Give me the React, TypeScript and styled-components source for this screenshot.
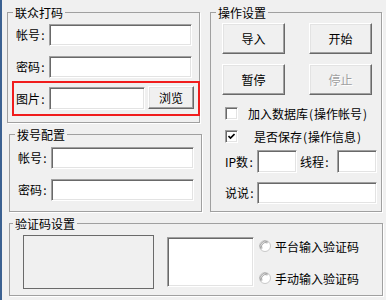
import React from "react";
import styled, { createGlobalStyle } from "styled-components";

const Global = createGlobalStyle`
  html, body { margin: 0; padding: 0; background: #f0f0f0; }
  body {
    font-family: "Noto Sans CJK SC", "Liberation Sans", sans-serif;
    font-size: 12px;
    color: #000;
  }
  * { box-sizing: border-box; }
`;

const Page = styled.div`
  width: 386px;
  height: 300px;
  background: #f0f0f0;
  border-left: 2px solid #3b6191;
  display: flex;
  flex-direction: column;
  overflow: hidden;
`;

const TopRow = styled.div`
  display: flex;
  align-items: flex-start;
`;

const LeftCol = styled.div`
  display: flex;
  flex-direction: column;
`;

const Group = styled.fieldset<{ $ml: number; $mt: number; $w: number; $h: number }>`
  margin: ${(p) => p.$mt}px 0 0 ${(p) => p.$ml}px;
  width: ${(p) => p.$w}px;
  height: ${(p) => p.$h}px;
  min-width: 0;
  padding: 0;
  border: 1px solid #a0a0a0;
  box-shadow: 1px 1px 0 #ffffff;
  display: flex;
  flex-direction: column;
  flex-shrink: 0;
`;

const Legend = styled.legend<{ $ml?: number }>`
  margin-left: ${(p) => p.$ml ?? 5}px;
  padding: 0 2px;
  height: 17px;
  line-height: 17px;
  font-size: 12px;
`;

const FormRow = styled.div<{ $mt: number; $pl: number; $h?: number }>`
  display: flex;
  align-items: center;
  margin-top: ${(p) => p.$mt}px;
  padding-left: ${(p) => p.$pl}px;
  height: ${(p) => p.$h ?? 22}px;
`;

const Label = styled.span<{ $w: number; $ml?: number }>`
  width: ${(p) => p.$w}px;
  margin-left: ${(p) => p.$ml ?? 0}px;
  flex-shrink: 0;
  white-space: nowrap;
  line-height: 16px;
`;

/* half-width punctuation cell, matching the 6px SimSun advance */
const Half = styled.span`
  display: inline-block;
  width: 6px;
  text-align: center;
`;

const Field = styled.input<{ $w: number; $h?: number; $mt?: number; $ml?: number }>`
  width: ${(p) => p.$w}px;
  height: ${(p) => p.$h ?? 22}px;
  margin: ${(p) => p.$mt ?? 0}px 0 0 ${(p) => p.$ml ?? 0}px;
  padding: 0 3px;
  flex-shrink: 0;
  background: #ffffff;
  border-style: solid;
  border-width: 1px;
  border-color: #a0a0a0 #ffffff #ffffff #a0a0a0;
  box-shadow: inset 1px 1px 0 #696969, inset -1px -1px 0 #e3e3e3;
  font: inherit;
  outline: none;
`;

const Memo = styled.textarea<{ $w: number; $h: number; $mt?: number; $ml?: number }>`
  width: ${(p) => p.$w}px;
  height: ${(p) => p.$h}px;
  margin: ${(p) => p.$mt ?? 0}px 0 0 ${(p) => p.$ml ?? 0}px;
  padding: 2px 3px;
  flex-shrink: 0;
  resize: none;
  background: #ffffff;
  border-style: solid;
  border-width: 1px;
  border-color: #a0a0a0 #ffffff #ffffff #a0a0a0;
  box-shadow: inset 1px 1px 0 #696969, inset -1px -1px 0 #e3e3e3;
  font: inherit;
  outline: none;
  overflow: hidden;
`;

const Btn = styled.button<{ $w: number; $h: number; $mt?: number; $ml?: number }>`
  width: ${(p) => p.$w}px;
  height: ${(p) => p.$h}px;
  margin: ${(p) => p.$mt ?? 0}px 0 0 ${(p) => p.$ml ?? 0}px;
  padding: 0;
  flex-shrink: 0;
  background: #f0f0f0;
  border-style: solid;
  border-width: 1px;
  border-color: #ffffff #696969 #696969 #ffffff;
  box-shadow: inset -1px -1px 0 #a0a0a0, inset 1px 1px 0 #e3e3e3;
  font: inherit;
  font-size: 12px;
  color: #000;
  &:disabled {
    color: #a0a0a0;
    text-shadow: 1px 1px 0 #ffffff;
  }
`;

const Highlight = styled.div`
  display: flex;
  align-items: flex-start;
  margin: 3px -1px 0 4px;
  height: 35px;
  border: 2px solid #f01c1c;
  padding: 4px 0 0 2px;
`;

const ButtonGrid = styled.div`
  display: grid;
  grid-template-columns: 63px 63px;
  grid-auto-rows: 31px;
  column-gap: 24px;
  row-gap: 10px;
  margin-top: 2px;
  padding-left: 11px;
`;

const CheckRow = styled.label<{ $mt: number; $gap: number }>`
  display: flex;
  align-items: center;
  height: 13px;
  margin-top: ${(p) => p.$mt}px;
  padding-left: 14px;
  gap: ${(p) => p.$gap}px;
  white-space: nowrap;
`;

const CheckBox = styled.span`
  width: 13px;
  height: 13px;
  flex-shrink: 0;
  display: flex;
  align-items: center;
  justify-content: center;
  background: #ffffff;
  border-style: solid;
  border-width: 1px;
  border-color: #a0a0a0 #ffffff #ffffff #a0a0a0;
  box-shadow: inset 1px 1px 0 #696969, inset -1px -1px 0 #e3e3e3;
`;

const BottomBody = styled.div`
  display: flex;
  align-items: flex-start;
  margin-top: 3px;
  padding-left: 13px;
`;

const CaptchaImage = styled.div`
  width: 131px;
  height: 54px;
  flex-shrink: 0;
  border: 1px solid #6a6a6a;
  background: #f0f0f0;
`;

const RadioCol = styled.div`
  display: flex;
  flex-direction: column;
  gap: 16px;
  margin: 3px 0 0 5px;
`;

const RadioRow = styled.label`
  display: flex;
  align-items: center;
  height: 16px;
  gap: 4px;
  white-space: nowrap;
`;

const Radio = () => (
  <svg width="12" height="12" viewBox="0 0 12 12" style={{ flexShrink: 0 }}>
    <circle cx="6" cy="6" r="5.5" fill="#ffffff" stroke="#c8c8c8" />
    <path d="M2.2 9.2 A5 5 0 0 1 9.2 2.2" fill="none" stroke="#a0a0a0" strokeWidth="1" />
    <path d="M3 8.4 A4 4 0 0 1 8.4 3" fill="none" stroke="#8a8a8a" strokeWidth="0.8" />
  </svg>
);

const Check = ({ checked }: { checked?: boolean }) => (
  <CheckBox>
    {checked && (
      <svg width="7" height="7" viewBox="0 0 7 7">
        <path d="M0.5 3 L2.5 5 L6.5 1" fill="none" stroke="#000" strokeWidth="1.6" />
      </svg>
    )}
  </CheckBox>
);

const Colon = () => <Half>:</Half>;

export default function App() {
  return (
    <>
      <Global />
      <Page>
        <TopRow>
          <LeftCol>
            <Group $ml={5} $mt={4} $w={193} $h={119}>
              <Legend>联众打码</Legend>
              <FormRow $mt={3} $pl={8}>
                <Label $w={33}>帐号<Colon /></Label>
                <Field $w={143} />
              </FormRow>
              <FormRow $mt={10} $pl={8}>
                <Label $w={33}>密码<Colon /></Label>
                <Field $w={143} />
              </FormRow>
              <Highlight>
                <FormRow $mt={0} $pl={0} $h={23}>
                  <Label $w={33}>图片<Colon /></Label>
                  <Field $w={96} $h={23} />
                </FormRow>
                <Btn $w={46} $h={23} $mt={-1} $ml={3}>浏览</Btn>
              </Highlight>
            </Group>
            <Group $ml={7} $mt={3} $w={193} $h={86}>
              <Legend>拨号配置</Legend>
              <FormRow $mt={4} $pl={8}>
                <Label $w={33}>帐号<Colon /></Label>
                <Field $w={143} />
              </FormRow>
              <FormRow $mt={10} $pl={8}>
                <Label $w={33}>密码<Colon /></Label>
                <Field $w={143} />
              </FormRow>
            </Group>
          </LeftCol>
          <Group $ml={8} $mt={4} $w={172} $h={208}>
            <Legend>操作设置</Legend>
            <ButtonGrid>
              <Btn $w={63} $h={31}>导入</Btn>
              <Btn $w={63} $h={31}>开始</Btn>
              <Btn $w={63} $h={31}>暂停</Btn>
              <Btn $w={63} $h={31} disabled>停止</Btn>
            </ButtonGrid>
            <CheckRow $mt={12} $gap={10}>
              <Check />
              <span>加入数据库<Half>(</Half>操作帐号<Half>)</Half></span>
            </CheckRow>
            <CheckRow $mt={10} $gap={16}>
              <Check checked />
              <span>是否保存<Half>(</Half>操作信息<Half>)</Half></span>
            </CheckRow>
            <FormRow $mt={7} $pl={14} $h={23}>
              <Label $w={32}>IP数<Colon /></Label>
              <Field $w={40} $h={23} />
              <Label $w={37} $ml={3}>线程<Colon /></Label>
              <Field $w={40} $h={23} />
            </FormRow>
            <FormRow $mt={9} $pl={14}>
              <Label $w={32}>说说<Colon /></Label>
              <Field $w={120} />
            </FormRow>
          </Group>
        </TopRow>
        <Group $ml={7} $mt={3} $w={374} $h={81}>
          <Legend $ml={3}>验证码设置</Legend>
          <BottomBody>
            <CaptchaImage />
            <Memo $w={87} $h={50} $mt={2} $ml={13} />
            <RadioCol>
              <RadioRow>
                <Radio />
                平台输入验证码
              </RadioRow>
              <RadioRow>
                <Radio />
                手动输入验证码
              </RadioRow>
            </RadioCol>
          </BottomBody>
        </Group>
      </Page>
    </>
  );
}
